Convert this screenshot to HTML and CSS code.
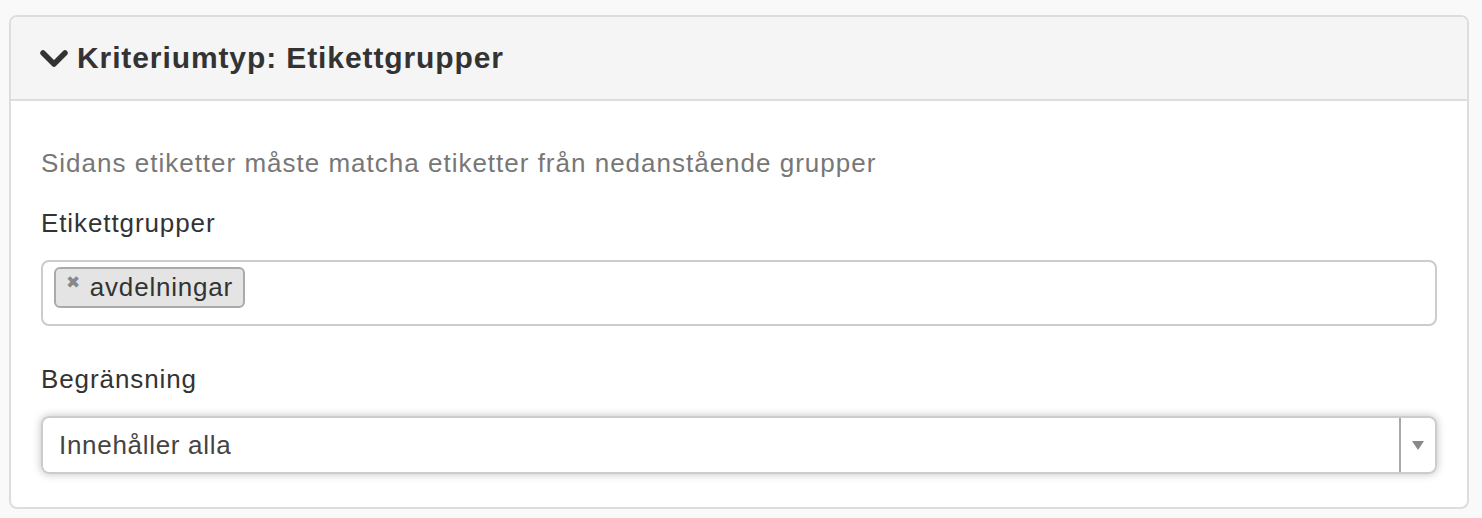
FILE: index.html
```html
<!DOCTYPE html>
<html lang="sv">
<head>
    <meta charset="UTF-8">
    <title>Kriteriumtyp: Etikettgrupper</title>
    <link rel="stylesheet" href="styles.css">
</head>
<body>

<div class="panel">
    <div class="panel-heading">
        <h3 class="panel-title">
            <svg class="chevron" viewBox="0 0 30 20" width="30" height="20">
                <path d="M4 4 L15 15 L26 4" fill="none" stroke="#333" stroke-width="5.5" stroke-linecap="round" stroke-linejoin="round"/>
            </svg>
            Kriteriumtyp: Etikettgrupper
        </h3>
    </div>
    <div class="panel-body">
        <p class="help">Sidans etiketter måste matcha etiketter från nedanstående grupper</p>

        <label class="field-label">Etikettgrupper</label>
        <div class="tag-input">
            <span class="tag"><span class="tag-remove">&#x2716;</span>avdelningar</span>
        </div>

        <label class="field-label">Begränsning</label>
        <div class="select">
            <span class="select-value">Innehåller alla</span>
            <span class="select-arrow"></span>
        </div>
    </div>
</div>

</body>
</html>
```

FILE: styles.css
```css
body {
    margin: 0;
    padding: 15px 13px 11px 9px;
    background-color: #f9f9f9;
    font-family: 'Liberation Sans', Arial, sans-serif;
    color: #333;
}
.panel {
    background-color: #fff;
    border: 2px solid #ddd;
    border-radius: 8px;
    overflow: hidden;
}
.panel-heading {
    background-color: #f5f5f5;
    border-bottom: 2px solid #ddd;
    height: 82px;
    display: flex;
    align-items: center;
    padding: 0 28px;
}
.panel-title {
    margin: 0;
    font-size: 30px;
    letter-spacing: 0.9px;
    font-weight: bold;
    color: #333;
    display: flex;
    align-items: center;
    gap: 8px;
}
.chevron {
    margin-top: 1px;
}
.panel-body {
    padding: 47px 30px 33px 30px;
}
.help {
    margin: 0 0 29px 0;
    font-size: 26px;
    letter-spacing: 1px;
    color: #777;
}
.field-label {
    display: block;
    font-size: 26px;
    letter-spacing: 0.9px;
    margin-bottom: 21px;
}
.tag-input {
    height: 66px;
    border: 2px solid #ccc;
    border-radius: 8px;
    display: flex;
    align-items: flex-start;
    padding: 5px 11px;
    box-sizing: border-box;
    margin-bottom: 38px;
}
.tag {
    display: inline-flex;
    align-items: center;
    height: 41px;
    box-sizing: border-box;
    padding: 0 10px 0 10px;
    background-color: #e4e4e4;
    border: 2px solid #aaa;
    border-radius: 6px;
    font-size: 26px;
    letter-spacing: 0.8px;
    color: #333;
}
.tag-remove {
    font-size: 17px;
    color: #888;
    margin-right: 9px;
    position: relative;
    top: -5px;
}
.select {
    height: 58px;
    border: 2px solid #ccc;
    border-radius: 8px;
    display: flex;
    align-items: center;
    box-sizing: border-box;
    box-shadow: 0 0 8px rgba(0, 0, 0, 0.25);
}
.select-value {
    flex: 1;
    font-size: 26px;
    letter-spacing: 0.7px;
    color: #444;
    padding-left: 16px;
}
.select-arrow {
    width: 34px;
    height: 100%;
    border-left: 2px solid #aaa;
    display: flex;
    align-items: center;
    justify-content: center;
}
.select-arrow::after {
    content: '';
    border-left: 6px solid transparent;
    border-right: 6px solid transparent;
    border-top: 9px solid #888;
}
```
